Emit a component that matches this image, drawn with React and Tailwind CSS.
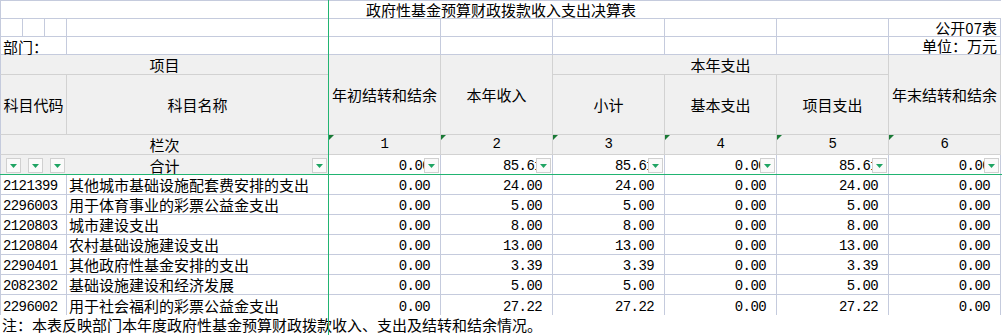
import React from "react";

const W = "border-r border-b border-[#c5cbdd]";
const H = "bg-[#f0f0f0] border-r border-b border-[#d2d2d2]";
const MONO = "font-['Liberation_Mono',monospace] text-[14px] tracking-[-0.6px]";

const data = [
  ["2121399", "其他城市基础设施配套费安排的支出", "0.00", "24.00", "24.00", "0.00", "24.00", "0.00"],
  ["2296003", "用于体育事业的彩票公益金支出", "0.00", "5.00", "5.00", "0.00", "5.00", "0.00"],
  ["2120803", "城市建设支出", "0.00", "8.00", "8.00", "0.00", "8.00", "0.00"],
  ["2120804", "农村基础设施建设支出", "0.00", "13.00", "13.00", "0.00", "13.00", "0.00"],
  ["2290401", "其他政府性基金安排的支出", "0.00", "3.39", "3.39", "0.00", "3.39", "0.00"],
  ["2082302", "基础设施建设和经济发展", "0.00", "5.00", "5.00", "0.00", "5.00", "0.00"],
  ["2296002", "用于社会福利的彩票公益金支出", "0.00", "27.22", "27.22", "0.00", "27.22", "0.00"],
];

const ROWSTART = ["row-start-8", "row-start-9", "row-start-10", "row-start-11", "row-start-12", "row-start-13", "row-start-14"];
const VALCOL = ["col-start-5", "col-start-6", "col-start-7", "col-start-8", "col-start-9", "col-start-10"];
const totals = ["0.00", "85.61", "85.61", "0.00", "85.61", "0.00"];

function FilterBtn({ className }) {
  return (
    <div className={`w-[15px] h-[15px] border border-[#d0d0d0] bg-[#fafafa] flex items-center justify-center ${className}`}>
      <svg width="7" height="4" viewBox="0 0 7 4">
        <path d="M0 0H7L3.5 4Z" fill="#1fa463" />
      </svg>
    </div>
  );
}

function Corner() {
  return (
    <svg width="5" height="5" viewBox="0 0 5 5" className="col-start-1 row-start-1 self-start justify-self-start">
      <path d="M0 0H5L0 5Z" fill="#1a7a36" />
    </svg>
  );
}

export default function App() {
  return (
    <div className="relative w-[1002px] h-[335px] overflow-hidden bg-white text-black font-['Noto_Sans_CJK_SC','Noto_Sans',sans-serif] text-[15px] leading-[15px]">
      <div className="grid grid-cols-[23px_22px_22px_262px_112px_112px_112px_112px_112px_112px] grid-rows-[19px_18px_18px_20px_60px_20px_20px_20px_20px_20px_20px_20px_20px_20px_21px]">
        {/* Row 1: title */}
        <div className="row-start-1 col-start-1 col-span-10 border-t border-l border-b border-[#c5cbdd] flex items-end justify-center pb-[1px] whitespace-nowrap">
          政府性基金预算财政拨款收入支出决算表
        </div>

        {/* Row 2 */}
        <div className={`row-start-2 col-start-1 border-l ${W}`} />
        <div className={`row-start-2 col-start-2 ${W}`} />
        <div className={`row-start-2 col-start-3 ${W}`} />
        <div className={`row-start-2 col-start-4 ${W}`} />
        <div className={`row-start-2 col-start-5 ${W}`} />
        <div className={`row-start-2 col-start-6 ${W}`} />
        <div className={`row-start-2 col-start-7 ${W}`} />
        <div className={`row-start-2 col-start-8 ${W}`} />
        <div className={`row-start-2 col-start-9 ${W}`} />
        <div className={`row-start-2 col-start-10 ${W} flex items-end justify-end pr-[3px] pb-[1px] whitespace-nowrap`}>
          公开07表
        </div>

        {/* Row 3 */}
        <div className={`row-start-3 col-start-1 col-span-3 border-l ${W} flex items-end pl-[2px] whitespace-nowrap`}>
          部门：
        </div>
        <div className={`row-start-3 col-start-4 ${W}`} />
        <div className={`row-start-3 col-start-5 ${W}`} />
        <div className={`row-start-3 col-start-6 ${W}`} />
        <div className={`row-start-3 col-start-7 ${W}`} />
        <div className={`row-start-3 col-start-8 ${W}`} />
        <div className={`row-start-3 col-start-9 ${W}`} />
        <div className={`row-start-3 col-start-10 ${W} flex items-end justify-end pr-[3px] pb-[1px] whitespace-nowrap`}>
          单位：万元
        </div>

        {/* Row 4 */}
        <div className={`row-start-4 col-start-1 col-span-4 border-l border-l-[#c5cbdd] ${H} flex items-center justify-center`}>
          项目
        </div>
        <div className={`row-start-4 row-span-2 col-start-5 ${H} flex items-center justify-center whitespace-nowrap`}>
          年初结转和结余
        </div>
        <div className={`row-start-4 row-span-2 col-start-6 ${H} flex items-center justify-center whitespace-nowrap`}>
          本年收入
        </div>
        <div className={`row-start-4 col-start-7 col-span-3 ${H} flex items-center justify-center`}>
          本年支出
        </div>
        <div className={`row-start-4 row-span-2 col-start-10 ${H} flex items-center justify-center whitespace-nowrap`}>
          年末结转和结余
        </div>

        {/* Row 5 */}
        <div className={`row-start-5 col-start-1 col-span-3 border-l border-l-[#c5cbdd] ${H} flex items-center justify-center whitespace-nowrap`}>
          科目代码
        </div>
        <div className={`row-start-5 col-start-4 ${H} flex items-center justify-center`}>
          科目名称
        </div>
        <div className={`row-start-5 col-start-7 ${H} flex items-center justify-center`}>
          小计
        </div>
        <div className={`row-start-5 col-start-8 ${H} flex items-center justify-center`}>
          基本支出
        </div>
        <div className={`row-start-5 col-start-9 ${H} flex items-center justify-center`}>
          项目支出
        </div>

        {/* Row 6 */}
        <div className={`row-start-6 col-start-1 col-span-4 border-l border-l-[#c5cbdd] ${H} flex items-center justify-center`}>
          栏次
        </div>
        {["1", "2", "3", "4", "5", "6"].map((n, i) => (
          <div key={n} className={`row-start-6 ${VALCOL[i]} ${H} grid`}>
            <Corner />
            <span className={`col-start-1 row-start-1 self-center justify-self-center ${MONO}`}>{n}</span>
          </div>
        ))}

        {/* Row 7: totals */}
        <div className={`row-start-7 col-start-1 col-span-4 border-l border-l-[#c5cbdd] ${H} flex items-end justify-center pb-[1px]`}>
          合计
        </div>
        {totals.map((v, i) => (
          <div key={i} className={`row-start-7 ${VALCOL[i]} ${W} flex items-end justify-end pr-[10px] overflow-hidden ${MONO}`}>
            {v}
          </div>
        ))}
        <FilterBtn className="row-start-7 col-start-1 self-end justify-self-end mb-[2px] mr-[2px]" />
        <FilterBtn className="row-start-7 col-start-2 self-end justify-self-end mb-[2px] mr-[2px]" />
        <FilterBtn className="row-start-7 col-start-3 self-end justify-self-end mb-[2px] mr-[2px]" />
        <FilterBtn className="row-start-7 col-start-4 self-end justify-self-end mb-[2px] mr-[2px]" />
        <FilterBtn className="row-start-7 col-start-5 self-end justify-self-end mb-[2px] mr-[2px]" />
        <FilterBtn className="row-start-7 col-start-6 self-end justify-self-end mb-[2px] mr-[2px]" />
        <FilterBtn className="row-start-7 col-start-7 self-end justify-self-end mb-[2px] mr-[2px]" />
        <FilterBtn className="row-start-7 col-start-8 self-end justify-self-end mb-[2px] mr-[2px]" />
        <FilterBtn className="row-start-7 col-start-9 self-end justify-self-end mb-[2px] mr-[2px]" />
        <FilterBtn className="row-start-7 col-start-10 self-end justify-self-end mb-[2px] mr-[2px]" />

        {/* Data rows */}
        {data.map((r, ri) => {
          const last = ri === data.length - 1;
          const cb = last ? "border-r border-[#c5cbdd]" : W;
          return (
            <React.Fragment key={r[0]}>
              <div className={`${ROWSTART[ri]} col-start-1 col-span-3 border-l ${cb} flex items-end pl-[2px] whitespace-nowrap ${MONO}`}>
                {r[0]}
              </div>
              <div className={`${ROWSTART[ri]} col-start-4 ${cb} flex items-end pl-[2px] pb-[2px] whitespace-nowrap`}>
                {r[1]}
              </div>
              {r.slice(2).map((v, ci) => (
                <div key={ci} className={`${ROWSTART[ri]} ${VALCOL[ci]} ${cb} flex items-end justify-end pr-[10px] ${MONO}`}>
                  {v}
                </div>
              ))}
            </React.Fragment>
          );
        })}

        {/* Footer */}
        <div className="row-start-15 col-start-1 col-span-10 flex items-end pl-[2px] pb-[4px] whitespace-nowrap">
          注：本表反映部门本年度政府性基金预算财政拨款收入、支出及结转和结余情况。
        </div>
      </div>

      {/* frozen pane lines */}
      <div className="absolute left-[328px] top-0 h-full w-px bg-[#21b472]" />
      <div className="absolute top-[174px] left-0 w-full h-px bg-[#21b472]" />
    </div>
  );
}
